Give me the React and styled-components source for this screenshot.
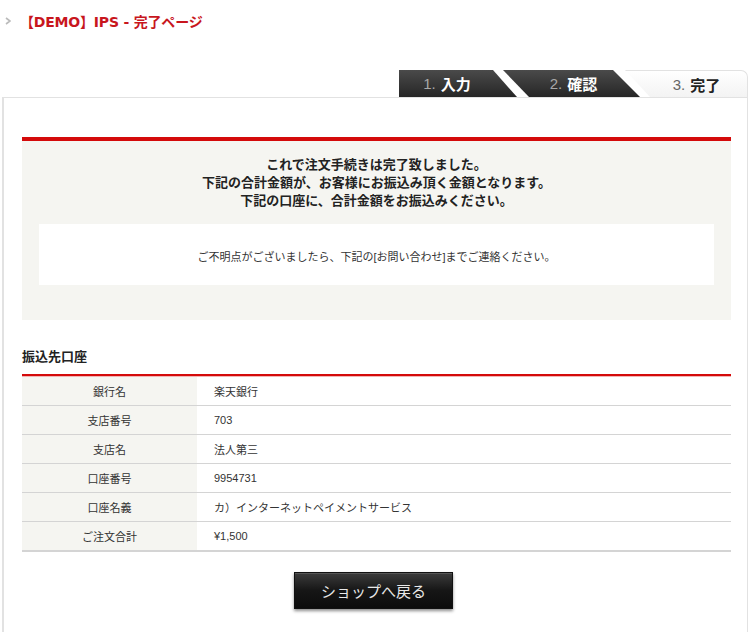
import React from 'react';
import styled, { createGlobalStyle } from 'styled-components';

const GlobalStyle = createGlobalStyle`
  body {
    margin: 0;
    background: #fff;
    font-family: "Liberation Sans", "Noto Sans CJK JP", sans-serif;
    color: #333;
  }
`;

const Page = styled.div`
  width: 750px;
  padding: 0 2px;
  box-sizing: border-box;
`;

const TitleBar = styled.h1`
  display: flex;
  align-items: center;
  height: 42px;
  margin: 0;
  padding-left: 3px;
  font-size: 14px;
  font-weight: bold;
  font-family: "DejaVu Sans", "Noto Sans CJK JP", sans-serif;
  letter-spacing: -0.2px;
  color: #c8161d;
`;

const Arrow = styled.svg`
  width: 6px;
  height: 8px;
  margin-right: 9px;
`;

const Steps = styled.div`
  display: flex;
  justify-content: flex-end;
  height: 27px;
  margin-top: 28px;
`;

const Step = styled.div`
  display: flex;
  align-items: center;
  justify-content: center;
  box-sizing: border-box;
  height: 27px;
  font-size: 15px;
  font-family: "Liberation Sans", "Noto Sans CJK JP", sans-serif;
  width: ${p => p.$w}px;
  margin-left: ${p => p.$ml || 0}px;
  padding: ${p => p.$pad || '0'};
  background: ${p => (p.$active ? 'linear-gradient(#ffffff, #f3f3f3)' : 'linear-gradient(#4a4a4a, #262626)')};
  clip-path: ${p => p.$clip};
  border-top-right-radius: ${p => (p.$active ? '7px' : '0')};
  border: ${p => (p.$active ? '1px solid #e2e2e2' : 'none')};
  border-bottom: none;
  span {
    color: ${p => (p.$active ? '#666' : '#a8a8a8')};
    font-weight: normal;
    margin-right: 5px;
  }
  b {
    color: ${p => (p.$active ? '#222' : '#fff')};
  }
`;

const Panel = styled.div`
  border: 1px solid #e2e2e2;
  border-bottom: none;
  border-left-width: 2px;
  padding: 39px 16px 40px 18px;
  background: #fff;
`;

const Notice = styled.div`
  border-top: 4px solid #d40a0a;
  background: #f5f5f1;
  padding: 15px 17px 35px;
`;

const Lead = styled.p`
  margin: 0 0 14px;
  text-align: center;
  font-size: 13px;
  line-height: 18px;
  font-weight: bold;
  color: #222;
`;

const InfoBox = styled.div`
  display: flex;
  align-items: center;
  justify-content: center;
  height: 61px;
  padding-top: 2px;
  box-sizing: border-box;
  background: #fff;
  font-size: 11px;
  color: #333;
`;

const SectionTitle = styled.h2`
  margin: 28px 0 0;
  padding-bottom: 8px;
  font-size: 13px;
  line-height: 18px;
  font-weight: bold;
  color: #222;
  border-bottom: 2px solid #d40a0a;
  box-shadow: 0 1px 0 #f3b5b5;
`;

const Table = styled.div`
  display: grid;
  grid-template-columns: 175px 1fr;
  margin-top: 1px;
`;

const Label = styled.div`
  height: 28px;
  display: flex;
  align-items: center;
  justify-content: center;
  background: #f5f5f1;
  border-bottom: 1px solid #d4d4d4;
  border-bottom-width: ${p => (p.$last ? '2px' : '1px')};
  font-size: 11px;
  color: #333;
`;

const Value = styled(Label)`
  justify-content: flex-start;
  padding-left: 17px;
  background: #fff;
`;

const Actions = styled.div`
  display: flex;
  justify-content: center;
  padding: 20px 0 0 0;
`;

const ShopButton = styled.button`
  width: 159px;
  height: 37px;
  margin-left: -6px;
  border: 1px solid #111;
  background: linear-gradient(#3b3b3b, #161616 50%, #0c0c0c);
  box-shadow: 0 2px 3px rgba(0, 0, 0, 0.45), inset 0 1px 0 #555;
  color: #e8e8e8;
  font-size: 15px;
  font-family: "Noto Sans CJK JP", sans-serif;
  cursor: pointer;
`;

const rows = [
  ['銀行名', '楽天銀行'],
  ['支店番号', '703'],
  ['支店名', '法人第三'],
  ['口座番号', '9954731'],
  ['口座名義', 'カ）インターネットペイメントサービス'],
  ['ご注文合計', '¥1,500'],
];

export default function App() {
  return (
    <Page>
      <GlobalStyle />
      <TitleBar>
        <Arrow viewBox="0 0 6 8">
          <path d="M1 1 L5 4 L1 7" fill="none" stroke="#bbb" strokeWidth="1.6" />
        </Arrow>
        【DEMO】IPS - 完了ページ
      </TitleBar>
      <Steps>
        <Step $w={118} $pad="0 22px 0 0" $clip="polygon(0 0, calc(100% - 24px) 0, 100% 100%, 0 100%)">
          <span>1.</span><b>入力</b>
        </Step>
        <Step $w={137} $ml={-14} $pad="0 0 0 4px" $clip="polygon(0 0, calc(100% - 27px) 0, 100% 100%, 26px 100%)">
          <span>2.</span><b>確認</b>
        </Step>
        <Step $active $w={123} $ml={-15} $pad="0 0 0 20px" $clip="polygon(0 0, 100% 0, 100% 100%, 25px 100%)">
          <span>3.</span><b>完了</b>
        </Step>
      </Steps>
      <Panel>
        <Notice>
          <Lead>
            これで注文手続きは完了致しました。<br />
            下記の合計金額が、お客様にお振込み頂く金額となります。<br />
            下記の口座に、合計金額をお振込みください。
          </Lead>
          <InfoBox>ご不明点がございましたら、下記の[お問い合わせ]までご連絡ください。</InfoBox>
        </Notice>
        <SectionTitle>振込先口座</SectionTitle>
        <Table>
          {rows.map(([k, v], i) => (
            <React.Fragment key={k}>
              <Label $last={i === rows.length - 1}>{k}</Label>
              <Value $last={i === rows.length - 1}>{v}</Value>
            </React.Fragment>
          ))}
        </Table>
        <Actions>
          <ShopButton>ショップへ戻る</ShopButton>
        </Actions>
      </Panel>
    </Page>
  );
}
